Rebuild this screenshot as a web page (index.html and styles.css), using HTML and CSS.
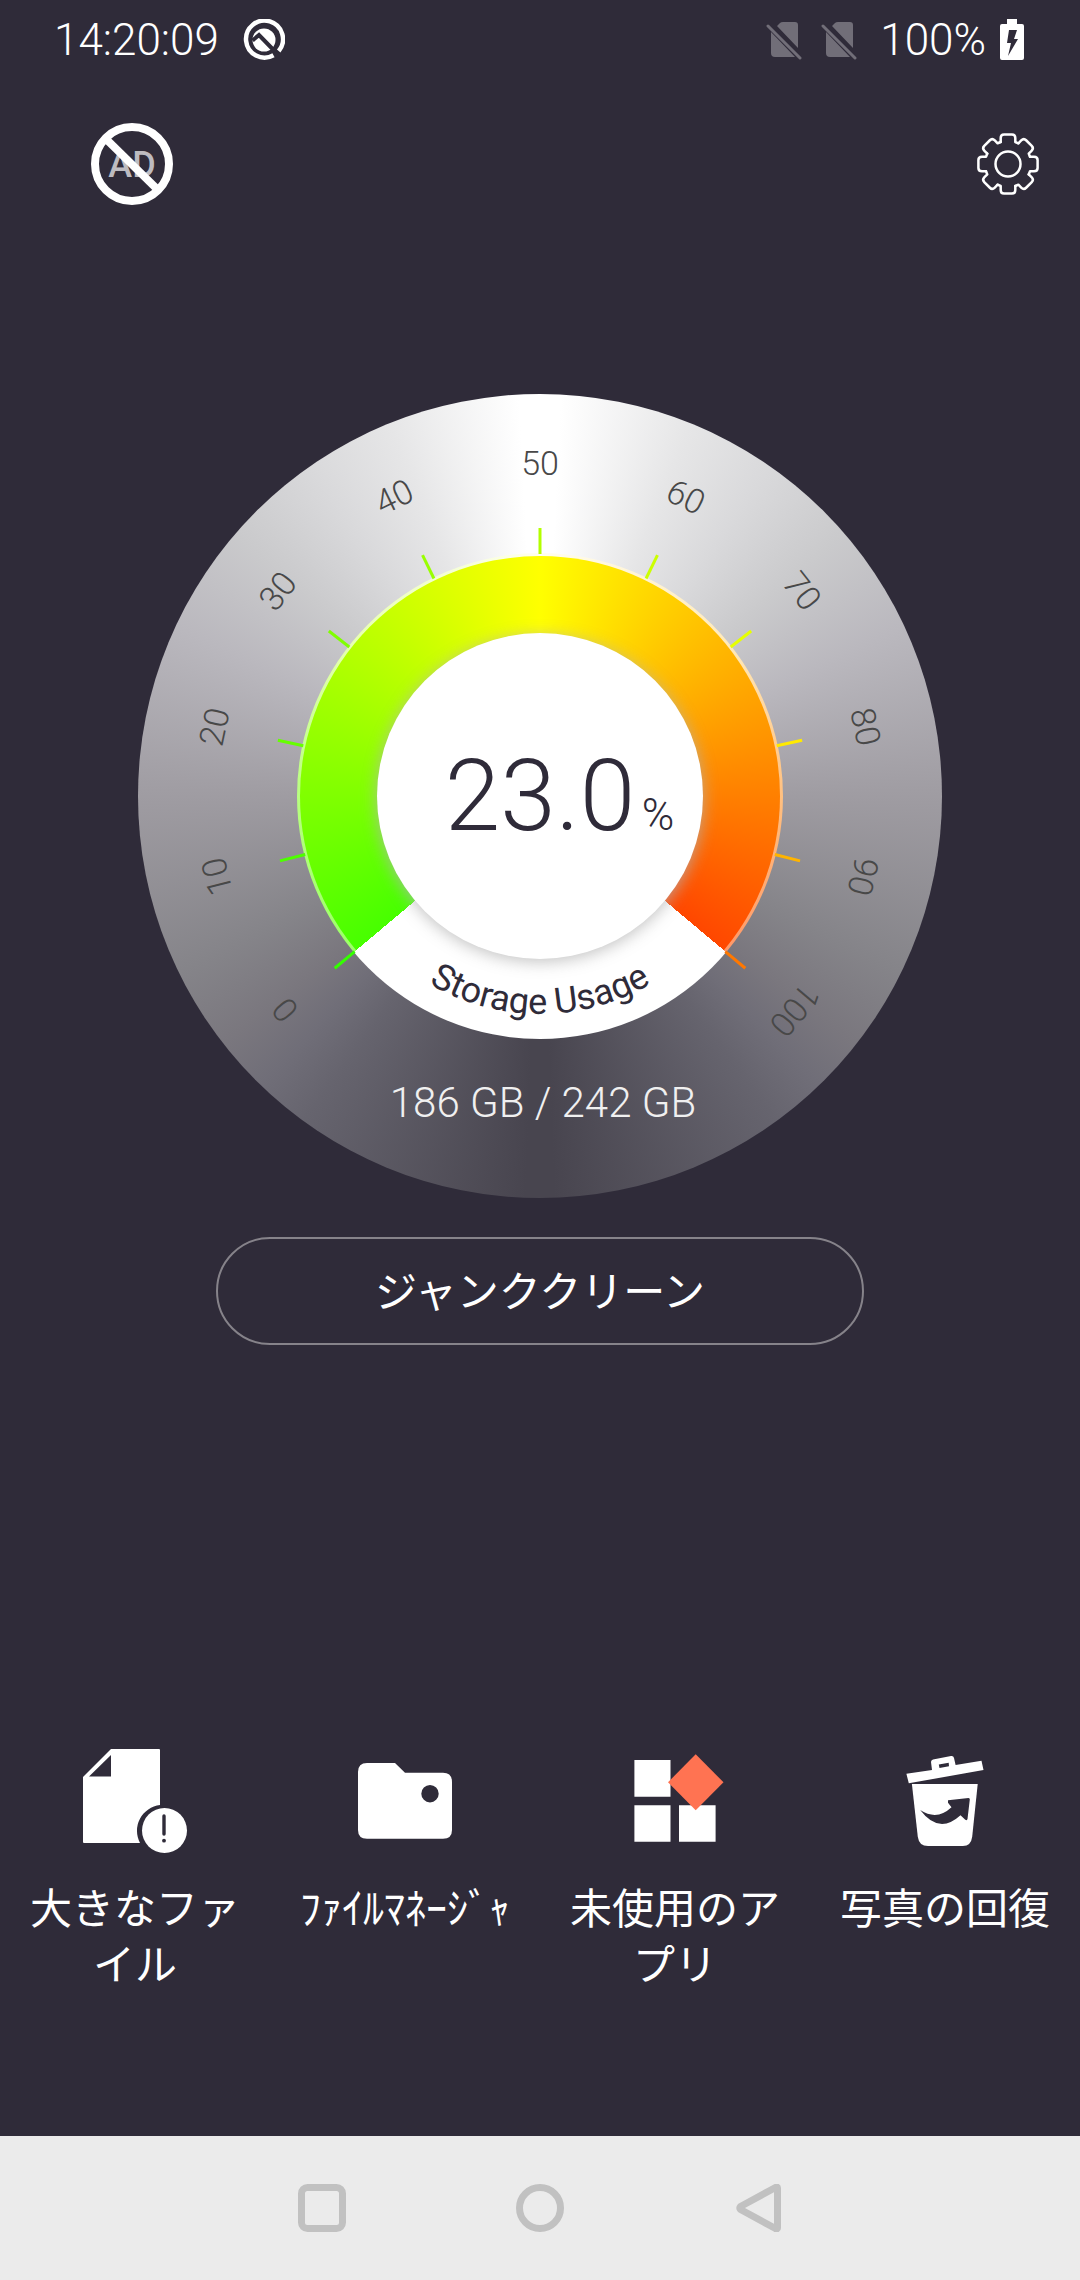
FILE: index.html
```html
<!DOCTYPE html>
<html lang="ja">
<head>
<meta charset="utf-8">
<meta name="viewport" content="width=device-width, initial-scale=1">
<title>ジャンククリーン</title>
<link rel="stylesheet" href="styles.css">
</head>
<body>
<div class="status-bar">
  <div class="status-group">
    <time class="clock">14:20:09</time>
    <svg class="status-badge" viewBox="0 0 42 42" aria-hidden="true">
      <path d="M30.500 36.300A18.500 18.500 0 1 1 35.700 32" fill="none" stroke="#fff" stroke-width="4.500"/>
      <circle cx="21" cy="21" r="11.500" fill="#fff"/>
      <path d="M9.500 21.500L16 16L33 33.500" fill="none" stroke="#2f2b39" stroke-width="4"/>
    </svg>
  </div>
  <div class="status-group">
    <svg class="sim" viewBox="0 0 38 40" aria-hidden="true"><path d="M11 6L14 3Q15 2 17 2H29Q32 2 32 5V28ZM5 12L29 37H9Q5 37 5 33Z"/><path d="M2 6L34 38" fill="none" stroke="#716e78" stroke-width="3" stroke-linecap="round"/></svg>
    <svg class="sim" viewBox="0 0 38 40" aria-hidden="true"><path d="M11 6L14 3Q15 2 17 2H29Q32 2 32 5V28ZM5 12L29 37H9Q5 37 5 33Z"/><path d="M2 6L34 38" fill="none" stroke="#716e78" stroke-width="3" stroke-linecap="round"/></svg>
    <span class="charge">100%</span>
    <svg class="battery" viewBox="0 0 24 42" aria-hidden="true"><path d="M7 0H17V5H22Q24 5 24 7V39Q24 41 22 41H2Q0 41 0 39V7Q0 5 2 5H7Z" fill="#fff"/><path d="M9 11H17L14 20H18L8 37L11 24H7Z" fill="#2f2b39"/></svg>
  </div>
</div>

<header class="toolbar">
  <button class="icon-button" type="button" aria-label="広告を削除">
    <svg class="no-ads" viewBox="0 0 82 82">
      <text x="41" y="54" class="no-ads-text">AD</text>
      <circle cx="41" cy="41" r="37" fill="none" stroke="#fff" stroke-width="8"/>
      <path d="M14 15L67 67" stroke="#fff" stroke-width="8"/>
    </svg>
  </button>
  <button class="icon-button" type="button" aria-label="設定">
    <svg class="gear" viewBox="-32 -32 64 64">
      <defs><path id="tooth" d="M-7.300-22V-26Q-7.300-29.600-4-29.600H4Q7.300-29.600 7.300-26V-22L10.400-20.700"/></defs>
      <g fill="none" stroke="#fff" stroke-width="2.500" stroke-linecap="round" stroke-linejoin="round">
        <use href="#tooth"/><use href="#tooth" transform="rotate(45)"/><use href="#tooth" transform="rotate(90)"/><use href="#tooth" transform="rotate(135)"/>
        <use href="#tooth" transform="rotate(180)"/><use href="#tooth" transform="rotate(225)"/><use href="#tooth" transform="rotate(270)"/><use href="#tooth" transform="rotate(315)"/>
        <circle r="12.500"/>
      </g>
    </svg>
  </button>
</header>

<main class="content">
  <section class="gauge" aria-label="Storage Usage">
    <div class="disc dial"></div>
    <div class="disc rim"></div>
    <div class="disc ring"></div>
    <div class="disc face"></div>
    <svg class="gauge-text" viewBox="0 0 804 804">
      <defs>
        <path id="caption-arc" d="M184 402A218 218 0 0 0 620 402"/>
      </defs>
      <g class="ticks">
        <g transform="rotate(-130 402 402)"><path d="M402 134V160" stroke="#33ff00"/><text x="402" y="81">0</text></g>
        <g transform="rotate(-104 402 402)"><path d="M402 134V160" stroke="#4dff00"/><text x="402" y="81">10</text></g>
        <g transform="rotate(-78 402 402)"><path d="M402 134V160" stroke="#66ff00"/><text x="402" y="81">20</text></g>
        <g transform="rotate(-52 402 402)"><path d="M402 134V160" stroke="#80ff00"/><text x="402" y="81">30</text></g>
        <g transform="rotate(-26 402 402)"><path d="M402 134V160" stroke="#99ff00"/><text x="402" y="81">40</text></g>
        <g><path d="M402 134V160" stroke="#b3ff00"/><text x="402" y="81">50</text></g>
        <g transform="rotate(26 402 402)"><path d="M402 134V160" stroke="#ccff00"/><text x="402" y="81">60</text></g>
        <g transform="rotate(52 402 402)"><path d="M402 134V160" stroke="#e6ff00"/><text x="402" y="81">70</text></g>
        <g transform="rotate(78 402 402)"><path d="M402 134V160" stroke="#ffea00"/><text x="402" y="81">80</text></g>
        <g transform="rotate(104 402 402)"><path d="M402 134V160" stroke="#ffb400"/><text x="402" y="81">90</text></g>
        <g transform="rotate(130 402 402)"><path d="M402 134V160" stroke="#ff7800"/><text x="402" y="81">100</text></g>
      </g>
      <text class="value" x="402" y="436">23.0</text>
      <text class="unit" x="520" y="436">%</text>
      <text class="caption"><textPath href="#caption-arc" startOffset="50%">Storage Usage</textPath></text>
      <text class="capacity" x="405" y="723">186 GB / 242 GB</text>
    </svg>
  </section>
  <button class="clean-button" type="button">ジャンククリーン</button>
</main>

<nav class="tools">
  <a class="tool" href="#large-files">
    <svg class="tool-icon" viewBox="0 0 112 112" aria-hidden="true">
      <path fill="#fff" fill-rule="evenodd" d="M4 31L32 3H80Q81 3 81 4V59A26 26 0 0 0 61 97H5Q4 97 4 96ZM10 30.500H32V9Z"/>
      <circle cx="85.500" cy="84.500" r="22.500" fill="#fff"/>
      <path d="M85 70V88" stroke="#2f2b39" stroke-width="3.400" stroke-linecap="round"/>
      <circle cx="85" cy="94.700" r="1.900" fill="#2f2b39"/>
    </svg>
    <span>大きなファイル</span>
  </a>
  <a class="tool" href="#file-manager">
    <svg class="tool-icon" viewBox="0 0 112 112" aria-hidden="true">
      <path fill="#fff" fill-rule="evenodd" d="M18 17H46L56 26.700H94Q103 26.700 103 36V84Q103 92.700 94 92.700H18Q9 92.700 9 84V26Q9 17 18 17ZM81 39A8.700 8.700 0 1 0 81 56.400A8.700 8.700 0 1 0 81 39Z"/>
    </svg>
    <span>ﾌｧｲﾙﾏﾈｰｼﾞｬ</span>
  </a>
  <a class="tool" href="#unused-apps">
    <svg class="tool-icon" viewBox="0 0 112 112" aria-hidden="true">
      <path fill="#fff" d="M15.400 14H51.500V50.700H15.400ZM15.400 59.300H51.500V95.700H15.400ZM60 59.300H96.600V95.700H60Z"/>
      <path fill="#ff7352" d="M76.700 8.300L104.500 36.300L76.700 64.300L49 36.300Z"/>
    </svg>
    <span>未使用のアプリ</span>
  </a>
  <a class="tool" href="#photo-recovery">
    <svg class="tool-icon" viewBox="0 0 112 112" aria-hidden="true">
      <path fill="#fff" fill-rule="evenodd" d="M17.400 27.700L43 24L42 16Q42 14 44 13.500L62 10Q64.500 9.600 65 12L66.600 19L92.500 14.700L94.500 24L19.800 37.300ZM49.800 18.500L50.500 22L60 20.300L59.700 16.800Z"/>
      <path fill="#fff" d="M22.900 38H88.700L83.200 90.700Q82 100 73.900 100H39Q30 100 28.800 90.700Z"/>
      <path fill="#2f2b39" d="M31.200 64Q48 75 62.500 61.300L59 56.700V54.300L79.500 52Q81 52 80.800 53.500L78.500 73Q78 75 76 73.500L71.500 69.300Q50 89 31.200 64Z"/>
    </svg>
    <span>写真の回復</span>
  </a>
</nav>

<footer class="system-nav">
  <button class="icon-button" type="button" aria-label="履歴"><svg class="nav-icon" viewBox="0 0 48 48"><rect x="3.500" y="3.500" width="41" height="41" rx="6"/></svg></button>
  <button class="icon-button" type="button" aria-label="ホーム"><svg class="nav-icon" viewBox="0 0 48 48"><circle cx="24" cy="24" r="20.500"/></svg></button>
  <button class="icon-button" type="button" aria-label="戻る"><svg class="nav-icon" viewBox="0 0 48 48"><path d="M43.500 4Q43.500 2.500 41.500 3.500L6.500 22.500Q5 24 6.500 25.500L41.500 44.500Q43.500 45.500 43.500 44Z"/></svg></button>
</footer>
</body>
</html>
```
FILE: styles.css
```css
* {
  box-sizing: border-box;
}

body {
  display: flex;
  flex-direction: column;
  min-height: 100vh;
  margin: 0;
  background: #2f2b39;
  color: #fff;
  font-family: "Noto Sans CJK JP", sans-serif;
  font-size: 42px;
  font-weight: 400;
  line-height: 56px;
}

button {
  padding: 0;
  border: 0;
  background: none;
  color: inherit;
  font: inherit;
}

svg {
  display: block;
}

.status-bar,
.gauge {
  font-family: Roboto, "Noto Sans CJK JP", sans-serif;
  font-weight: 300;
}

.status-bar {
  display: flex;
  justify-content: space-between;
  height: 80px;
  padding: 0 56px 0 54px;
  font-size: 44px;
}

.status-group {
  display: flex;
  align-items: center;
}

.clock {
  margin-right: 24px;
}

.status-badge {
  width: 42px;
  height: 42px;
}

.sim {
  width: 38px;
  height: 40px;
  margin-right: 17px;
  fill: #716e78;
}

.charge {
  margin: 0 14px 0 4px;
}

.battery {
  width: 24px;
  height: 42px;
}

.toolbar {
  display: flex;
  align-items: center;
  justify-content: space-between;
  padding: 43px 40px 0 91px;
}

.no-ads {
  width: 82px;
  height: 82px;
}

.no-ads-text {
  fill: #bdbbc0;
  font-family: Roboto, sans-serif;
  font-size: 36px;
  font-weight: 500;
  text-anchor: middle;
}

.gear {
  width: 64px;
  height: 64px;
}

.content {
  display: flex;
  flex-direction: column;
  align-items: center;
  gap: 39px;
  padding-top: 189px;
}

.gauge {
  display: grid;
  place-items: center;
}

.disc,
.gauge-text {
  grid-area: 1 / 1;
}

.disc {
  border-radius: 50%;
}

.dial {
  width: 804px;
  height: 804px;
  background: conic-gradient(#fff 0deg, #fff 3deg, #e6e6e7 22deg, #d9d9db 35deg, #cacacc 49deg, #bab8be 65deg, #9f9ca2 90deg, #858489 116deg, #7a777e 128deg, #706e78 136deg, #66646e 144deg, #48454f 178deg, #48454f 182deg, #66646e 216deg, #706e78 224deg, #7a777e 232deg, #858489 244deg, #9f9ca2 270deg, #bab8be 295deg, #cacacc 311deg, #d9d9db 325deg, #e6e6e7 338deg, #fff 357deg);
}

.rim {
  width: 486px;
  height: 486px;
  background: conic-gradient(#fffef0 0deg, #ffe9b8 52deg, #ffc080 90deg, #ff9868 130deg, #fff 130deg, #fff 230deg, #9cff68 230deg, #b8ff80 270deg, #e6ffb0 308deg, #fffef0 360deg);
}

.ring {
  width: 480px;
  height: 480px;
  background: conic-gradient(#ff0 0deg, #ff4700 130deg, #fff 130deg, #fff 230deg, #47ff00 230deg, #ff0 360deg);
}

.face {
  width: 326px;
  height: 326px;
  background: #fff;
  box-shadow: 0 3px 16px rgb(180 180 180 / 80%);
}

.gauge-text {
  width: 804px;
  height: 804px;
  fill: #2f2b39;
  text-anchor: middle;
}

.ticks {
  fill: #484848;
  font-size: 34px;
  stroke-width: 3px;
}

.value {
  font-size: 100px;
}

.unit {
  font-size: 44px;
}

.caption {
  font-size: 36px;
  font-weight: 400;
}

.capacity {
  fill: #f0f0f0;
  font-size: 42px;
}

.clean-button {
  width: 60%;
  height: 108px;
  padding-bottom: 4px;
  border: 2px solid #86838a;
  border-radius: 54px;
}

.tools {
  display: grid;
  grid-template-columns: repeat(4, 1fr);
  margin-top: auto;
  padding-bottom: 146px;
}

.tool {
  display: flex;
  flex-direction: column;
  align-items: center;
  gap: 20px;
  padding: 0 30px;
  color: inherit;
  text-align: center;
  text-decoration: none;
}

.tool-icon {
  width: 112px;
  height: 112px;
}

.system-nav {
  display: flex;
  align-items: center;
  justify-content: center;
  gap: 170px;
  height: 144px;
  background: #ebebeb;
}

.nav-icon {
  width: 48px;
  height: 48px;
  fill: none;
  stroke: #c1c1c1;
  stroke-width: 7px;
  stroke-linejoin: round;
}
```
